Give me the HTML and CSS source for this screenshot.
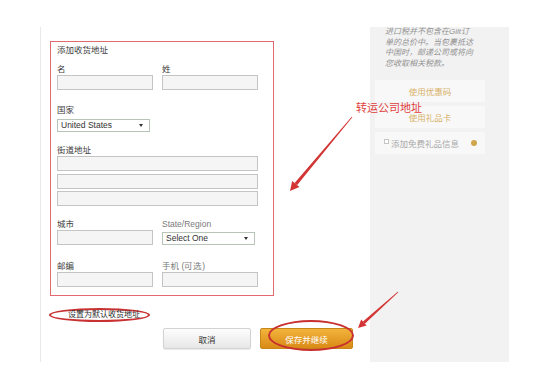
FILE: index.html
```html
<!DOCTYPE html>
<html lang="zh-CN">
<head>
    <meta charset="UTF-8">
    <meta name="viewport" content="width=device-width, initial-scale=1.0">
    <title>添加收货地址</title>
    <link rel="stylesheet" href="styles.css">
</head>
<body>
<div class="page">
    <div class="checkout">
        <div class="main">
            <form class="address-box">
                <h2 class="box-title">添加收货地址</h2>

                <div class="row first-row">
                    <div class="field">
                        <label for="firstName">名</label>
                        <input type="text" id="firstName">
                    </div>
                    <div class="field">
                        <label for="lastName">姓</label>
                        <input type="text" id="lastName">
                    </div>
                </div>

                <div class="field country">
                    <label>国家</label>
                    <div class="select">United States</div>
                </div>

                <div class="field street">
                    <label for="street1">街道地址</label>
                    <div class="street-lines">
                        <input type="text" id="street1" class="wide">
                        <input type="text" class="wide">
                        <input type="text" class="wide">
                    </div>
                </div>

                <div class="row city-row">
                    <div class="field">
                        <label for="city">城市</label>
                        <input type="text" id="city">
                    </div>
                    <div class="field">
                        <label class="latin">State/Region</label>
                        <div class="select state">Select One</div>
                    </div>
                </div>

                <div class="row zip-row">
                    <div class="field">
                        <label for="zip">邮编</label>
                        <input type="text" id="zip">
                    </div>
                    <div class="field">
                        <label for="phone" class="muted">手机 <span class="latin">(可选)</span></label>
                        <input type="text" id="phone">
                    </div>
                </div>
            </form>

            <div class="default-row">
                <span class="default-mark">设置为默认收货地址</span>
            </div>

            <div class="actions">
                <button type="button" class="btn-cancel">取消</button>
                <button type="button" class="btn-save">保存并继续<span class="save-mark"></span></button>
            </div>
        </div>

        <aside class="side">
            <p class="tax-note">进口税并不包含在<span class="latin">Gilt</span>订<br>单的总价中。当包裹抵达<br>中国时，邮递公司或将向<br>您收取相关税款。</p>
            <div class="side-box gold">使用优惠码</div>
            <div class="side-box gold">使用礼品卡</div>
            <div class="side-box gift">
                <span class="tick"></span>
                <span class="gift-text">添加免费礼品信息</span>
                <span class="help"></span>
            </div>
        </aside>
    </div>

    <div class="note">转运公司地址</div>

    <!-- annotation arrows -->
    <svg class="arrows" width="546" height="390" viewBox="0 0 546 390">
        <polygon points="294.6,183.0 297.0,185.2 352.3,117.3 351.7,116.7" fill="#d33434"/>
        <polygon points="290,191 299.4,187.1 292.2,181.1" fill="#d33434"/>
        <polygon points="363.0,321.5 364.8,323.7 398.3,292.3 397.7,291.7" fill="#d33434"/>
        <polygon points="358,328 366.6,325.6 361.2,319.6" fill="#d33434"/>
    </svg>
</div>
</body>
</html>
```

FILE: styles.css
```css
body {
    margin: 0;
    background-color: #fff;
    font-family: "Liberation Sans", "Noto Sans CJK SC", sans-serif;
    color: #444;
}

.page {
    position: relative;
    width: 546px;
    height: 390px;
    padding: 27px 0 0 40px;
    box-sizing: border-box;
}

.checkout {
    display: flex;
    height: 335px;
}

.main {
    width: 330px;
    padding: 14px 0 0 10px;
    box-sizing: border-box;
    box-shadow: inset 1px 0 0 #e8e8e8;
}

.address-box {
    width: 224px;
    margin: 0;
    padding: 2px 0 8px 6px;
    border: 1px solid #e06a6f;
    box-sizing: border-box;
}

.box-title {
    margin: 0;
    font-size: 8.5px;
    line-height: 12px;
    font-weight: normal;
    color: #3c3c3c;
}

.row {
    display: flex;
    gap: 9px;
}

.first-row {
    margin-top: 7px;
}

.country {
    margin-top: 14px;
}

.street {
    margin-top: 12px;
}

.city-row {
    margin-top: 12px;
}

.zip-row {
    margin-top: 15px;
}

label {
    display: block;
    height: 12px;
    font-size: 8.5px;
    line-height: 12px;
    color: #3c3c3c;
}

label.latin,
.muted {
    color: #7a7a7a;
}

.latin {
    font-family: "Liberation Sans", sans-serif;
}

input[type="text"] {
    display: block;
    width: 96px;
    height: 15px;
    margin: 0;
    padding: 0;
    border: 1px solid #c4c4c4;
    background-color: #f5f5f5;
    box-sizing: border-box;
}

input.wide {
    width: 201px;
}

.street-lines {
    display: flex;
    flex-direction: column;
    gap: 2.5px;
}

.select {
    position: relative;
    width: 93px;
    height: 13px;
    margin-top: 3px;
    padding-left: 3px;
    border: 1px solid #b8c4b8;
    background-color: #fff;
    box-sizing: border-box;
    font-size: 8.5px;
    line-height: 11px;
    color: #333;
}

.select::after {
    content: "";
    position: absolute;
    right: 6px;
    top: 4px;
    border-left: 2px solid transparent;
    border-right: 2px solid transparent;
    border-top: 3px solid #333;
}

.select.state {
    margin-top: 2px;
}

.default-row {
    margin-top: 7px;
    height: 14px;
}

.default-mark {
    display: inline-block;
    width: 101px;
    height: 14px;
    margin-left: -1px;
    padding-left: 17px;
    border: 2px solid #c83232;
    border-radius: 50%;
    box-sizing: border-box;
    font-size: 8px;
    line-height: 10px;
    color: #2c2c2c;
    white-space: nowrap;
}

.actions {
    display: flex;
    gap: 9px;
    margin-top: 11px;
    padding-left: 113px;
}

.btn-cancel,
.btn-save {
    height: 21px;
    padding: 0;
    border-radius: 2px;
    font-family: "Noto Sans CJK SC", sans-serif;
    font-size: 8.5px;
    cursor: pointer;
}

.btn-cancel {
    width: 88px;
    border: 1px solid #d2d2d2;
    background: linear-gradient(#fdfdfd, #e7e7e7);
    color: #333;
    box-shadow: 0 1px 1px rgba(0, 0, 0, 0.08);
}

.btn-save {
    position: relative;
    width: 93px;
    border: 1px solid #c98618;
    background: linear-gradient(#f3b43c, #d98a16);
    color: #fff;
}

.save-mark {
    position: absolute;
    left: 7px;
    top: -9px;
    width: 86px;
    height: 31px;
    border: 2px solid #c83030;
    border-radius: 50%;
    box-sizing: border-box;
}

.side {
    width: 139px;
    background-color: #f2f2f2;
}

.tax-note {
    margin: 0;
    padding-left: 15px;
    font-size: 8px;
    line-height: 10.5px;
    font-style: italic;
    color: #939393;
    white-space: nowrap;
}

.side-box {
    display: flex;
    align-items: center;
    width: 110px;
    height: 22px;
    margin: 4px 0 0 5px;
    background-color: #f8f8f8;
    font-size: 8.5px;
}

.side-box.gold {
    justify-content: center;
    color: #d8b36a;
}

.tax-note + .side-box {
    margin-top: 11px;
}

.gift {
    padding-left: 9px;
    box-sizing: border-box;
    color: #a8a8a8;
}

.tick {
    width: 5px;
    height: 5px;
    margin: 0 2px 3px 0;
    border: 1px solid #c4c4c4;
    background-color: #fff;
    box-sizing: border-box;
}

.help {
    width: 6px;
    height: 6px;
    margin-left: 12px;
    border-radius: 50%;
    background-color: #cfa64a;
}

.note {
    position: absolute;
    left: 356px;
    top: 100px;
    font-family: "Noto Sans CJK SC", sans-serif;
    font-size: 11px;
    line-height: 14px;
    color: #e0403c;
}

.arrows {
    position: absolute;
    left: 0;
    top: 0;
    pointer-events: none;
}
```
